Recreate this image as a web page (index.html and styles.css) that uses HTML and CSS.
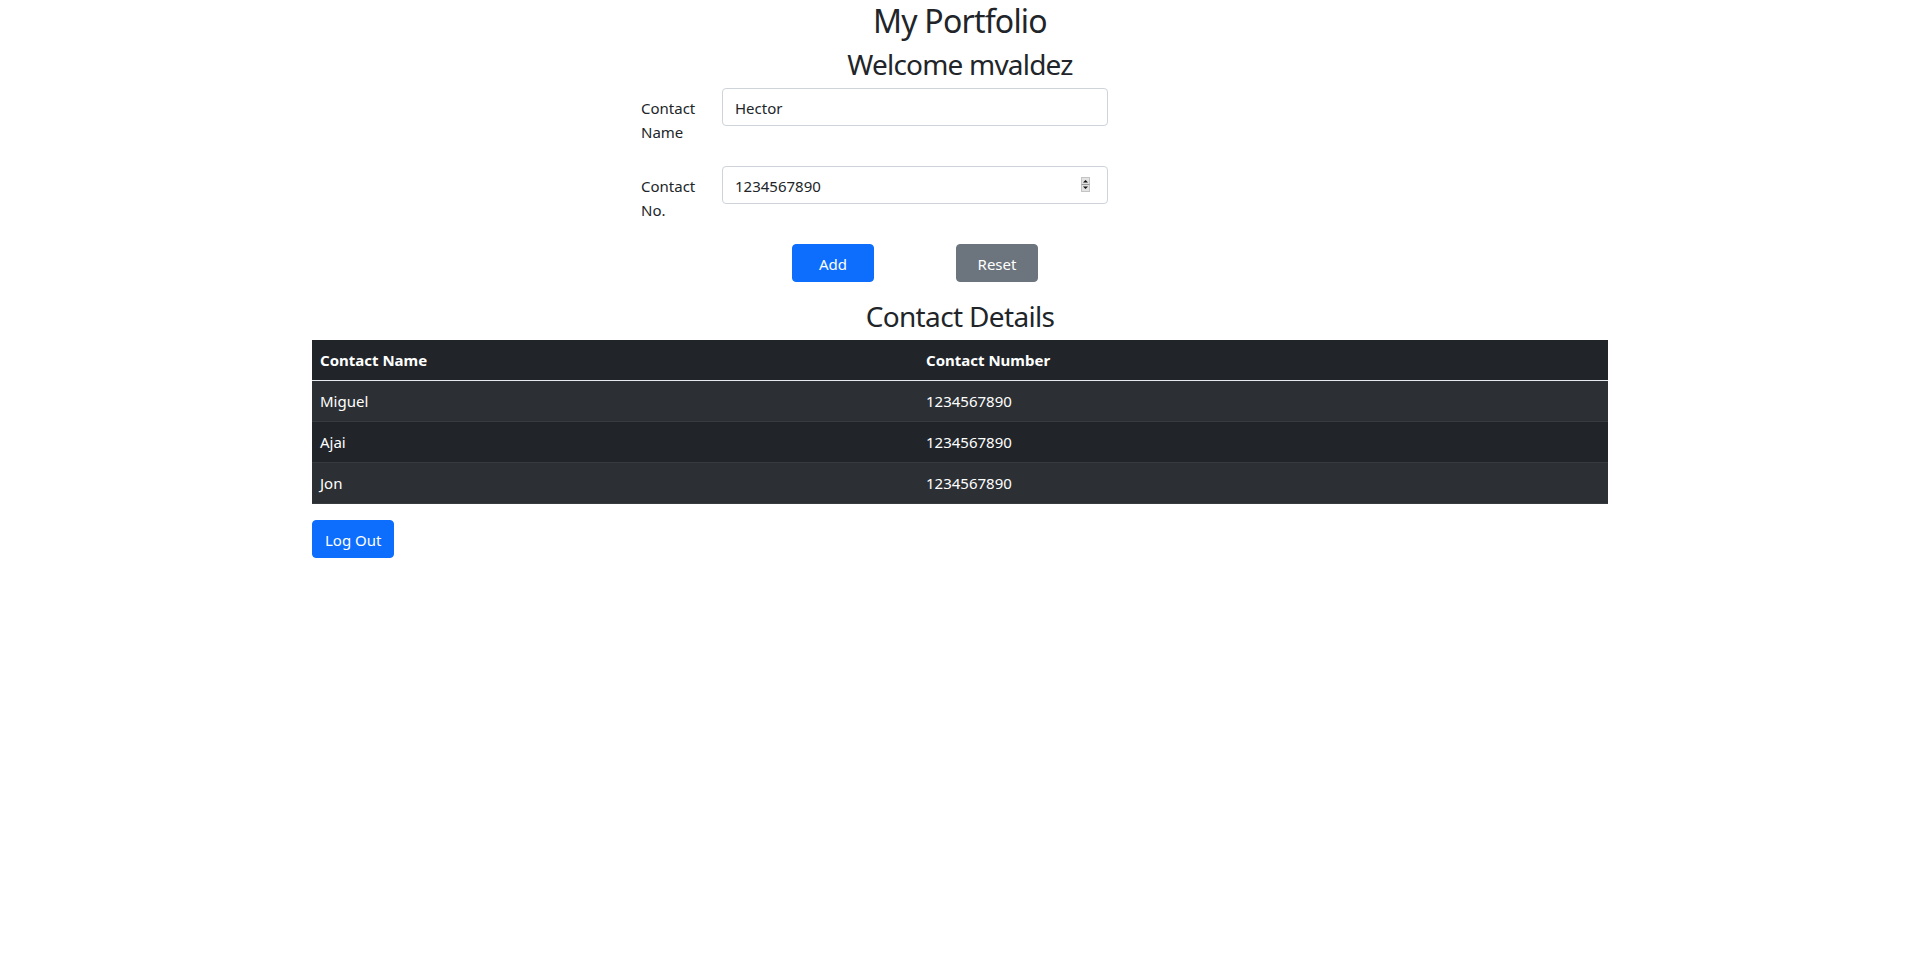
FILE: index.html
```html
<!DOCTYPE html>
<html lang="en">
<head>
<meta charset="utf-8">
<title>My Portfolio</title>
<link rel="stylesheet" href="styles.css">
</head>
<body>
<div class="page">
  <main class="container">
    <h2 class="page-title">My Portfolio</h2>
    <h3 class="section-title">Welcome mvaldez</h3>

    <form class="contact-form">
      <div class="form-row">
        <label class="form-label" for="name">Contact Name</label>
        <div class="field">
          <input class="form-control" id="name" type="text" value="Hector">
        </div>
      </div>
      <div class="form-row">
        <label class="form-label" for="number">Contact No.</label>
        <div class="field">
          <input class="form-control" id="number" type="text" value="1234567890">
          <span class="spinner" aria-hidden="true">
            <svg width="9" height="15" viewBox="0 0 9 15">
              <rect x="0.5" y="0.5" width="8" height="14" fill="#e3e3e3" stroke="#c4c4c4"/>
              <line x1="0.5" y1="7.5" x2="8.5" y2="7.5" stroke="#9a9a9a"/>
              <polygon points="2,5.5 7,5.5 4.5,3" fill="#111"/>
              <polygon points="2,9.5 7,9.5 4.5,12" fill="#111"/>
            </svg>
          </span>
        </div>
      </div>
      <div class="form-actions">
        <button type="button" class="btn btn-primary btn-fixed">Add</button>
        <button type="button" class="btn btn-secondary btn-fixed">Reset</button>
      </div>
    </form>

    <h3 class="section-title section-title-tight">Contact Details</h3>
    <table class="contacts">
      <thead>
        <tr><th class="col-name">Contact Name</th><th>Contact Number</th></tr>
      </thead>
      <tbody>
        <tr class="odd"><td>Miguel</td><td>1234567890</td></tr>
        <tr><td>Ajai</td><td>1234567890</td></tr>
        <tr class="odd"><td>Jon</td><td>1234567890</td></tr>
      </tbody>
    </table>

    <button type="button" class="btn btn-primary">Log Out</button>
  </main>
</div>
</body>
</html>
```

FILE: styles.css
```css
* {
  box-sizing: border-box;
}

html, body {
  margin: 0;
  padding: 0;
  background: #fff;
}

body {
  font-family: "Noto Sans", "Liberation Sans", sans-serif;
  font-size: 16px;
  line-height: 1.5;
  color: #212529;
}

.page {
  width: 1920px;
}

.container {
  width: 1296px;
  margin: 0 auto;
}

.page-title,
.section-title {
  margin: 0 0 6px;
  padding-top: 2px;
  font-weight: 400;
  line-height: 1.2;
  text-align: center;
}

.page-title {
  font-size: 32px;
  letter-spacing: -0.8px;
}

.section-title {
  font-size: 28px;
  letter-spacing: -0.8px;
}

.section-title-tight {
  letter-spacing: -0.65px;
}

.contact-form {
  padding-left: 329px;
  margin-bottom: 16px;
}

.form-row {
  display: grid;
  grid-template-columns: 69px 386px;
  column-gap: 12px;
  margin-bottom: 16px;
}

.form-label {
  padding: 8px 0 6px;
  font-size: 15px;
  line-height: 24px;
}

.field {
  position: relative;
}

.form-control {
  display: block;
  width: 100%;
  height: 38px;
  padding: 7px 12px 5px;
  font-family: inherit;
  font-size: 15px;
  line-height: 24px;
  color: #212529;
  background: #fff;
  border: 1px solid #ced4da;
  border-radius: 4px;
}

.spinner {
  position: absolute;
  right: 18px;
  top: 11px;
  display: block;
  width: 9px;
  height: 15px;
  line-height: 0;
}

.form-actions {
  display: flex;
  gap: 82px;
  padding-left: 151px;
}

.btn {
  display: inline-block;
  padding: 7px 12px 5px;
  font-family: inherit;
  font-size: 15px;
  line-height: 24px;
  color: #fff;
  border: 1px solid transparent;
  border-radius: 4px;
  cursor: pointer;
}

.btn-fixed {
  width: 82px;
}

.btn-primary {
  background: #0d6efd;
  border-color: #0d6efd;
}

.btn-secondary {
  background: #6c757d;
  border-color: #6c757d;
}

.contacts {
  width: 100%;
  border-collapse: collapse;
  margin-bottom: 16px;
  color: #fff;
  background: #212529;
  font-size: 15px;
}

.contacts th,
.contacts td {
  padding: 8px;
  line-height: 24px;
  text-align: left;
  border-bottom: 1px solid #373b3e;
}

.contacts th {
  font-weight: 700;
  border-bottom-color: #e9ecef;
}

.contacts .col-name {
  width: 606px;
}

.contacts tr.odd td {
  background: #2c3034;
}
```
